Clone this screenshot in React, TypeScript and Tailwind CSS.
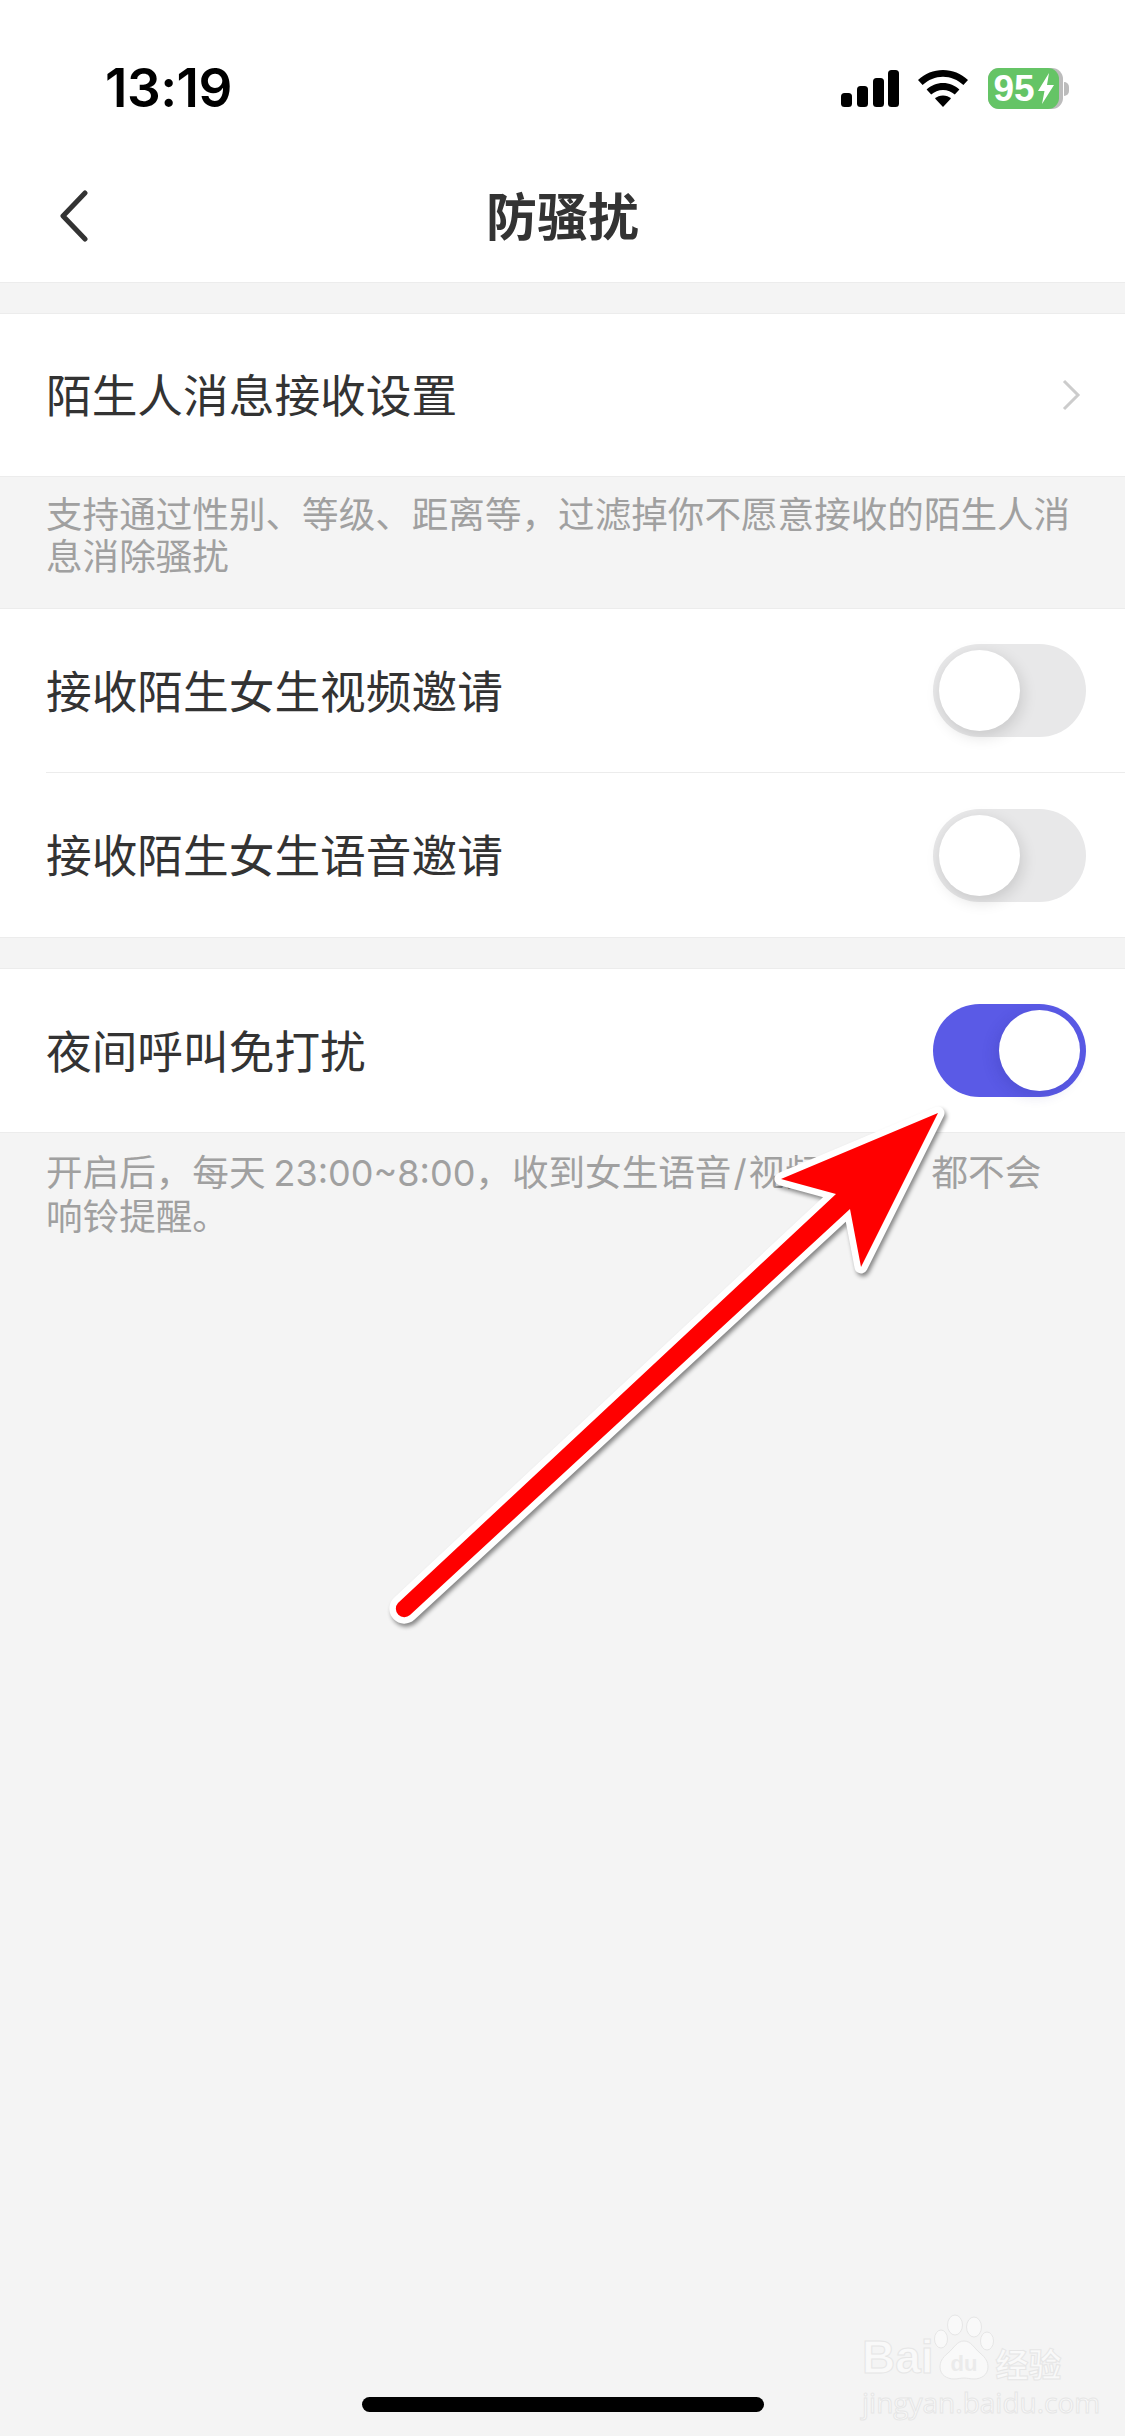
const CJK = "font-['Noto_Sans_CJK_SC',sans-serif]"

function Toggle({ on = false }: { on?: boolean }) {
  if (on) {
    return (
      <div className="flex h-[93px] w-[153px] shrink-0 items-center justify-end rounded-full bg-[#5a5ae6] pr-[6px]">
        <div className="h-[81px] w-[81px] rounded-full bg-white shadow-[-4px_4px_14px_rgba(40,40,140,0.18)]" />
      </div>
    )
  }
  return (
    <div className="flex h-[93px] w-[153px] shrink-0 items-center rounded-full bg-[#e8e8e9] pl-[6px]">
      <div className="h-[81px] w-[81px] rounded-full bg-white shadow-[2px_5px_16px_rgba(0,0,0,0.14)]" />
    </div>
  )
}

function Row({ label, height, children }: { label: string; height: string; children?: React.ReactNode }) {
  return (
    <div className={`flex items-center justify-between pl-[46px] ${height}`}>
      <span className="pb-[2px] text-[45.7px] leading-none text-[#333333]">{label}</span>
      {children}
    </div>
  )
}

function StatusIcons() {
  return (
    <div className="flex items-center">
      <svg width="58" height="37" viewBox="0 0 58 37" fill="#000">
        <rect x="0" y="23" width="11" height="14" rx="3.5" />
        <rect x="16" y="16" width="11" height="21" rx="3.5" />
        <rect x="32" y="8" width="11" height="29" rx="3.5" />
        <rect x="47" y="0" width="11" height="37" rx="3.5" />
      </svg>
      <svg className="ml-[19px]" width="50" height="37" viewBox="0 0 50 37" fill="#000">
        <path d="M25 0C15.5 0 7 3.6 0 10l4.6 5C10.4 9.700 17.400 6.700 25 6.700S39.600 9.700 45.400 15l4.600-5C43 3.600 34.500 0 25 0Z" />
        <path d="M25 13C18.600 13 13 15.400 8.600 19.600l4.600 5C16.400 21.600 20.500 19.900 25 19.900s8.600 1.700 11.800 4.700l4.600-5C37 15.400 31.400 13 25 13Z" />
        <path d="M25 25.500c-3.200 0-6 1.200-8 3.100L25 37l8-8.400c-2-1.900-4.800-3.100-8-3.100Z" />
      </svg>
      <div className="ml-[20px] flex h-[41px] w-[75px] items-center rounded-[11px] bg-[#bcbcbc]">
        <div className="flex h-full w-[71px] items-center justify-center gap-[3px] rounded-[11px] bg-[#65c466] font-['Liberation_Sans',sans-serif] text-[37px] font-bold leading-none text-white">
          <span>95</span>
          <svg width="16" height="31" viewBox="0 0 16 31" fill="#fff">
            <path d="M11 0 0 18h6.500L4 31 16 12H9l2-12Z" />
          </svg>
        </div>
      </div>
      <div className="ml-[1px] h-[14px] w-[5px] rounded-r-full bg-[#bcbcbc]" />
    </div>
  )
}

function Watermark() {
  const textClass = "block leading-none text-[#f9f9f9] [-webkit-text-stroke:1px_#e6e6e6]"
  return (
    <div className="absolute left-[862px] top-[2314px] flex w-[204px] flex-col">
      <div className="flex h-[66px] items-end">
        <span className={`font-['Liberation_Sans',sans-serif] text-[46px] font-bold ${textClass}`}>Bai</span>
        <svg className="shrink-0" width="60" height="66" viewBox="0 0 60 66" fill="#f9f9f9" stroke="#e6e6e6">
          <ellipse cx="21" cy="11" rx="7.500" ry="10" />
          <ellipse cx="40" cy="13" rx="7.500" ry="10" />
          <ellipse cx="7" cy="25" rx="6.500" ry="9" />
          <ellipse cx="53" cy="27" rx="6.500" ry="9" />
          <path d="M30 27c-7 0-10 7-16 12-6 5-8 9-8 14 0 8 7 12 14 12 4 0 7-1 10-1s6 1 10 1c7 0 14-4 14-12 0-5-2-9-8-14-6-5-9-12-16-12Z" />
          <text x="30" y="57" textAnchor="middle" fontSize="22" fontWeight="700" fontFamily="Liberation Sans" fill="#ebebeb" stroke="none">du</text>
        </svg>
        <span className={`ml-[2px] whitespace-nowrap text-[33px] font-bold ${textClass}`}>经验</span>
      </div>
      <span className={`mt-[8px] whitespace-nowrap font-['Open_Sans',sans-serif] text-[28px] ${textClass}`}>jingyan.baidu.com</span>
    </div>
  )
}

export default function App() {
  return (
    <div className={`relative h-[2436px] w-[1125px] overflow-hidden bg-[#f4f4f4] ${CJK}`}>
      {/* 顶部 */}
      <header className="h-[283px] border-b border-[#ececec] bg-white">
        <div className="flex h-[178px] items-start justify-between pl-[105px] pr-[56px] pt-[68px]">
          <span className="font-['Inter',sans-serif] text-[53px] font-semibold leading-[41px] tracking-[-0.5px] text-black">13:19</span>
          <StatusIcons />
        </div>
        <div className="relative flex h-[78px] items-center justify-center pb-[5px]">
          <svg className="absolute left-[58px] top-[12px]" width="32" height="52" viewBox="0 0 32 52" fill="none" stroke="#333" strokeWidth="5" strokeLinecap="round" strokeLinejoin="round">
            <path d="M27 3 5 26l22 23" />
          </svg>
          <h1 className="text-[51px] font-bold leading-none text-[#333333]">防骚扰</h1>
        </div>
      </header>

      <div className="mt-[30px] border-y border-[#ececec] bg-white">
        <Row label="陌生人消息接收设置" height="h-[162px]">
          <svg className="mr-[44px]" width="20" height="32" viewBox="0 0 20 32" fill="none" stroke="#cccccc" strokeWidth="3">
            <path d="m3 2 14 14L3 30" />
          </svg>
        </Row>
      </div>

      <p className="h-[131px] px-[46px] pt-[15px] text-[36.6px] leading-[42px] text-[#a0a0a0] [text-spacing-trim:space-all]">
        支持通过性别、等级、距离等，过滤掉你不愿意接收的陌生人消息消除骚扰
      </p>

      <div className="border-y border-[#ececec] bg-white">
        <Row label="接收陌生女生视频邀请" height="h-[163px] pr-[39px]">
          <Toggle />
        </Row>
        <div className="ml-[46px] h-px bg-[#ececec]" />
        <Row label="接收陌生女生语音邀请" height="h-[164px] pr-[39px]">
          <Toggle />
        </Row>
      </div>

      <div className="mt-[30px] border-y border-[#ececec] bg-white">
        <Row label="夜间呼叫免打扰" height="h-[163px] pr-[39px]">
          <Toggle on />
        </Row>
      </div>

      <p className="pl-[46px] pr-[60px] pt-[17px] text-[36.6px] leading-[42px] text-[#a0a0a0] [text-spacing-trim:space-all]">
        开启后，每天<span className="ml-[8px] font-['Inter',sans-serif] text-[36px]">23:00~8:00</span>，收到女生语音<span className="px-[2px] font-['Inter',sans-serif]">/</span>视频邀请，都不会响铃提醒。
      </p>

      {/* 红色标注箭头 */}
      <svg className="absolute left-0 top-0 drop-shadow-[2px_3px_2px_rgba(0,0,0,0.45)]" width="1125" height="2436" fill="none">
        <path
          d="M938 1113 781 1179l55 15L398 1603a8.500 8.500 0 0 0 12 12L850 1209l11 58Z"
          fill="#ff0000"
          stroke="#ffffff"
          strokeWidth="13"
          strokeLinejoin="round"
          paintOrder="stroke"
        />
      </svg>

      <Watermark />

      {/* Home 指示条 */}
      <div className="absolute left-[362px] top-[2397px] h-[15px] w-[402px] rounded-full bg-black" />
    </div>
  )
}
